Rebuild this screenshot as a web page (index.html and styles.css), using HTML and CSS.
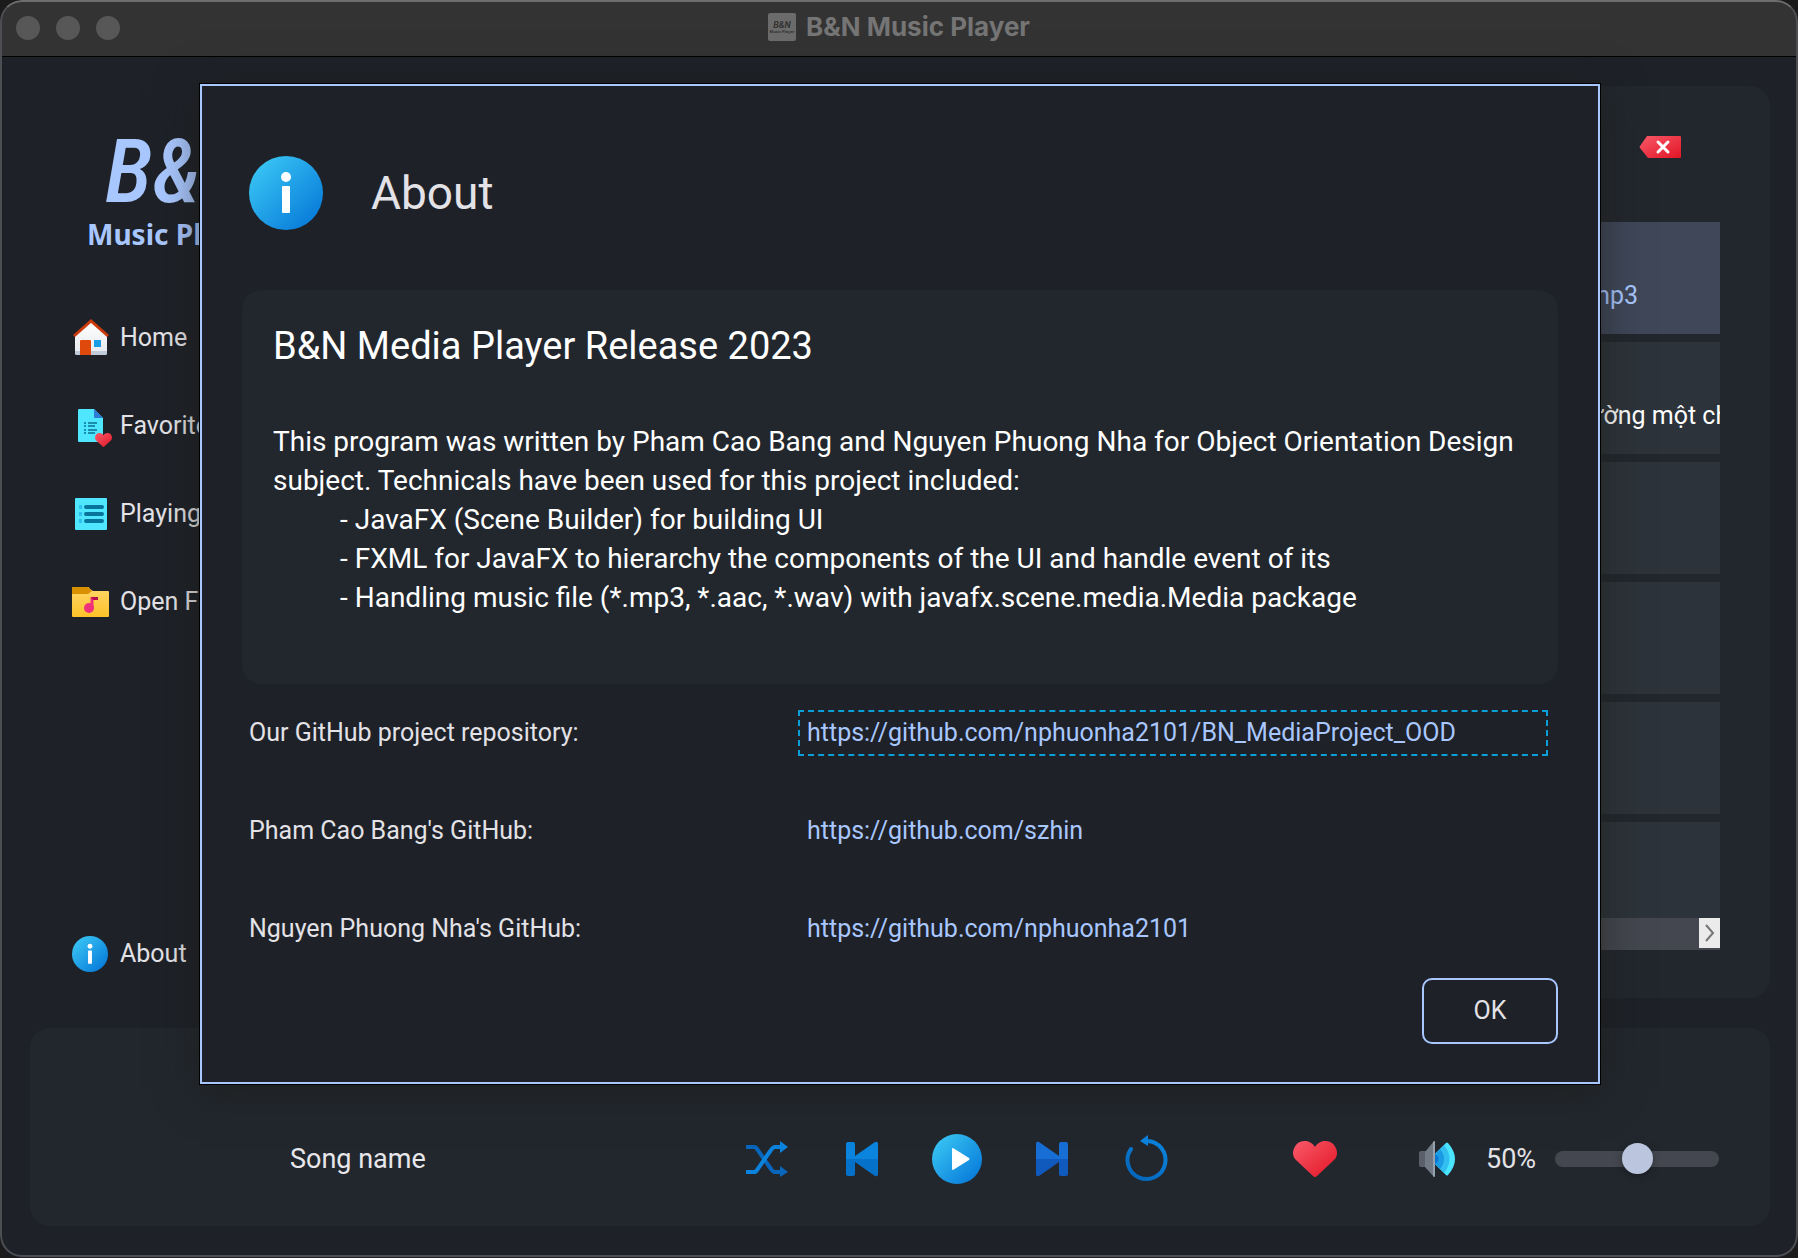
FILE: index.html
```html
<!DOCTYPE html>
<html lang="en">
<head>
<meta charset="utf-8">
<title>B&amp;N Music Player</title>
<link rel="stylesheet" href="styles.css">
</head>
<body>
<svg class="defs" width="0" height="0" aria-hidden="true">
  <defs>
    <linearGradient id="sky" x1="0.15" y1="0.15" x2="0.85" y2="0.85"><stop offset="0" stop-color="#36c0f2"/><stop offset="1" stop-color="#0a7fdb"/></linearGradient>
    <linearGradient id="rose" x1="0" y1="0" x2="1" y2="1"><stop offset="0" stop-color="#fb5a6a"/><stop offset="1" stop-color="#e01525"/></linearGradient>
    <linearGradient id="gold" x1="0" y1="0" x2="0" y2="1"><stop offset="0" stop-color="#ffd668"/><stop offset="1" stop-color="#fdc22a"/></linearGradient>
    <linearGradient id="wall" x1="0" y1="0" x2="0" y2="1"><stop offset="0" stop-color="#ffffff"/><stop offset="1" stop-color="#e6e9ee"/></linearGradient>
    <linearGradient id="turn" x1="1" y1="0" x2="0.3" y2="1"><stop offset="0" stop-color="#0b86e0"/><stop offset="1" stop-color="#0568bd"/></linearGradient>
    <symbol id="info" viewBox="0 0 74 74">
      <circle cx="37" cy="37" r="37" fill="url(#sky)"/>
      <circle cx="37" cy="21" r="5" fill="#fff"/>
      <rect x="33" y="30" width="8" height="27" rx="1" fill="#fff"/>
    </symbol>
    <symbol id="heart" viewBox="0 0 44 36">
      <path d="M22 6C27-2 37-1 41 4c4 5 4 11 0 15L24 35q-2 2-4 0L3 19C-1 15-1 9 3 4c4-5 14-6 19 2z" fill="url(#rose)"/>
    </symbol>
  </defs>
</svg>
<div class="window">
  <header class="titlebar">
    <div class="lights"><span class="light"></span><span class="light"></span><span class="light"></span></div>
    <div class="title">
      <svg width="28" height="28" viewBox="0 0 28 28" aria-hidden="true"><rect width="28" height="28" rx="2" fill="#6b6b6b"/><text x="14" y="15" class="mark-big">B&amp;N</text><text x="14" y="20" class="mark-small">Music Player</text></svg>
      <span>B&amp;N Music Player</span>
    </div>
  </header>

  <div class="content">
    <aside class="sidebar">
      <div class="logo"><span class="logo-mark">B&amp;N</span><span class="logo-name">Music Player</span></div>
      <nav class="nav">
        <button class="nav-item" type="button">
          <svg width="38" height="38" viewBox="0 0 38 38" aria-hidden="true"><path d="M3 17 19 2l16 15v17q0 2-2 2H5q-2 0-2-2z" fill="url(#wall)"/><path d="M3 32h32v2q0 2-2 2H5q-2 0-2-2z" fill="#c0cad8"/><path d="M8 36V22q0-1 1-1h9q1 0 1 1v14z" fill="#df4a0c"/><rect x="22" y="21" width="7" height="7" fill="#1b9de6"/><path d="M2 17 19 2l17 15" fill="none" stroke="#cb3a0a" stroke-width="3"/></svg>
          <span>Home</span>
        </button>
        <button class="nav-item" type="button">
          <svg width="38" height="38" viewBox="0 0 38 38" aria-hidden="true"><path d="M7 2h15l9 9v23q0 1-1 1H7q-1 0-1-1V3q0-1 1-1z" fill="#4fe6ff"/><path d="M22 2 31 11h-8q-1 0-1-1z" fill="#2f7bd8"/><path d="M12 16h2m2 0h9M12 19h2m2 0h7M12 23h2m2 0h9M12 26h2m2 0h7" stroke="#0a7193" stroke-width="1.5"/><svg x="23" y="26" width="17" height="14"><use href="#heart"/></svg></svg>
          <span>Favorites</span>
        </button>
        <button class="nav-item" type="button">
          <svg width="38" height="38" viewBox="0 0 38 38" aria-hidden="true"><rect x="3" y="3" width="32" height="32" rx="1" fill="#4fe6ff"/><path d="M14 12h16M14 19h16M14 26h16" stroke="#06749b" stroke-width="4" stroke-linecap="round"/><path d="M7 12h3M7 19h3M7 26h3" stroke="#30bff0" stroke-width="4"/></svg>
          <span>Playing</span>
        </button>
        <button class="nav-item" type="button">
          <svg width="38" height="38" viewBox="0 0 38 38" aria-hidden="true"><path d="M1 4h15q1 0 2 2l3 2H36q1 0 1 1v24q0 1-1 1H1q-1 0-1-1V5q0-1 1-1z" fill="url(#gold)"/><path d="M1 4h15l4 4-4 3H0V5q0-1 1-1z" fill="#d99000"/><circle cx="17" cy="25" r="5" fill="#f0307a"/><path d="M20 25V14" stroke="#f0307a" stroke-width="3"/><path d="M19 14h7v3h-5" fill="#b80f4d"/></svg>
          <span>Open File</span>
        </button>
        <button class="nav-item nav-last" type="button">
          <svg width="36" height="36" aria-hidden="true"><use href="#info"/></svg>
          <span>About</span>
        </button>
      </nav>
    </aside>

    <main class="queue">
      <div class="queue-head">
        <button class="icon-button" type="button" aria-label="Clear list">
          <svg width="42" height="22" viewBox="0 0 42 22" aria-hidden="true"><path d="M8 0h33q1 0 1 1v20q0 1-1 1H9L1 12q-1-1 0-2z" fill="url(#rose)"/><path d="m19 6 10 10M29 6 19 16" stroke="#fff" stroke-width="3" stroke-linecap="round"/></svg>
        </button>
      </div>
      <ul class="tracks">
        <li class="track selected"><span class="track-name">mp3</span></li>
        <li class="track"><span class="track-name">ường một ch</span></li>
        <li class="track"></li>
        <li class="track"></li>
        <li class="track"></li>
        <li class="track"></li>
      </ul>
      <div class="scrollbar">
        <button class="scroll-button" type="button" aria-label="Scroll right"><svg width="12" height="18" viewBox="0 0 12 18" aria-hidden="true"><path d="m2 1 7 8-7 8" fill="none" stroke="#757575" stroke-width="2"/></svg></button>
      </div>
    </main>
  </div>

  <footer class="player">
    <span class="song">Song name</span>
    <div class="controls">
      <button class="control" type="button" aria-label="Shuffle">
        <svg width="42" height="36" viewBox="0 0 42 36" aria-hidden="true"><path d="M0 6h8q2 0 3 2l14 20q2 3 4 3h6" fill="none" stroke="#0867bd" stroke-width="4"/><path d="m34 25 8 6-8 5z" fill="#0867bd"/><path d="M0 31h8q2 0 3-2L25 9q2-3 4-3h6" fill="none" stroke="#0b83dc" stroke-width="4"/><path d="m34 0 8 6-8 6z" fill="#0b83dc"/></svg>
      </button>
      <button class="control" type="button" aria-label="Previous">
        <svg width="32" height="34" viewBox="0 0 32 34" aria-hidden="true"><path d="M0 17V2q0-2 2-2h5q2 0 2 2v12L29 0q3-1 3 2v15z" fill="#0b84dd"/><path d="M0 17v15q0 2 2 2h5q2 0 2-2V20l20 14q3 1 3-2V17z" fill="#0671c9"/></svg>
      </button>
      <button class="control" type="button" aria-label="Play">
        <svg width="50" height="50" viewBox="0 0 50 50" aria-hidden="true"><circle cx="25" cy="25" r="25" fill="url(#sky)"/><path d="M20 15q0-1 1-1l16 10q1 1 0 2L21 36q-1 0-1-1z" fill="#fff"/></svg>
      </button>
      <button class="control" type="button" aria-label="Next">
        <svg width="32" height="34" viewBox="0 0 32 34" aria-hidden="true"><path d="M32 17V2q0-2-2-2h-5q-2 0-2 2v12L3 0Q0-1 0 2v15z" fill="#176fd6"/><path d="M32 17v15q0 2-2 2h-5q-2 0-2-2V20L3 34q-3 1-3-2V17z" fill="#1059bd"/></svg>
      </button>
      <button class="control" type="button" aria-label="Repeat">
        <svg width="42" height="48" viewBox="0 0 42 48" aria-hidden="true"><path d="M21 6A19 19 0 1 1 5 14" fill="none" stroke="url(#turn)" stroke-width="4" stroke-linecap="round"/><path d="m14 6 8-6v11z" fill="#0b83dc"/></svg>
      </button>
    </div>
    <button class="control" type="button" aria-label="Like"><svg width="44" height="36" aria-hidden="true"><use href="#heart"/></svg></button>
    <div class="volume">
      <button class="control" type="button" aria-label="Mute">
        <svg width="36" height="36" viewBox="0 0 36 36" aria-hidden="true"><path d="M2 10h5v16H2q-2 0-2-2V12q0-2 2-2z" fill="#59606a"/><path d="M6 11 15 0v36L6 26z" fill="#727b85"/><path d="M14 1q2-2 2 0v34q0 2-2 0z" fill="#98a2ae"/><path d="m16 13 11-11q1-1 2 0 14 16 0 32-1 1-2 0L16 23z" fill="#4ce5ff"/><path d="m16 13 9-9q11 14 0 28l-9-9z" fill="#33bef0"/><path d="m16 13 5-5q8 10 0 20l-5-5z" fill="#1a9be3"/><path d="M16 13q7 5 0 10z" fill="#0a76d0"/></svg>
      </button>
      <label class="volume-value" for="volume">50%</label>
      <input class="slider" id="volume" type="range" min="0" max="100" value="50">
    </div>
  </footer>

  <div class="overlay">
    <section class="dialog" role="dialog" aria-labelledby="dialog-title">
      <header class="dialog-head">
        <svg width="74" height="74" aria-hidden="true"><use href="#info"/></svg>
        <h1 class="dialog-title" id="dialog-title">About</h1>
      </header>
      <div class="card">
        <h2 class="card-title">B&amp;N Media Player Release 2023</h2>
        <p class="card-text">This program was written by Pham Cao Bang and Nguyen Phuong Nha for Object Orientation Design subject. Technicals have been used for this project included:</p>
        <ul class="card-list">
          <li>- JavaFX (Scene Builder) for building UI</li>
          <li>- FXML for JavaFX to hierarchy the components of the UI and handle event of its</li>
          <li>- Handling music file (*.mp3, *.aac, *.wav) with javafx.scene.media.Media package</li>
        </ul>
      </div>
      <div class="links">
        <span>Our GitHub project repository:</span><a class="link focused" href="https://github.com/nphuonha2101/BN_MediaProject_OOD">https://github.com/nphuonha2101/BN_MediaProject_OOD</a>
        <span>Pham Cao Bang's GitHub:</span><a class="link" href="https://github.com/szhin">https://github.com/szhin</a>
        <span>Nguyen Phuong Nha's GitHub:</span><a class="link" href="https://github.com/nphuonha2101">https://github.com/nphuonha2101</a>
      </div>
      <div class="actions"><button class="ok" type="button">OK</button></div>
    </section>
  </div>
</div>
</body>
</html>
```
FILE: styles.css
```css
:root {
  --bg: #1e2128;
  --panel: #22272e;
  --row: #2c333a;
  --accent: #a9c7ff;
  --text: #e3e2e6;
  --track: #44474f;
}

* { box-sizing: border-box; }

body {
  margin: 0;
  background: #1b1b1b;
  color: var(--text);
  font-family: Roboto, "Liberation Sans", sans-serif;
  font-size: 25px;
  line-height: 32px;
}

button {
  padding: 0;
  border: 0;
  background: none;
  color: inherit;
  font: inherit;
}

svg { display: block; flex: none; overflow: visible; }
ul { margin: 0; padding: 0; list-style: none; }
.defs { position: absolute; }

.window {
  position: relative;
  display: flex;
  flex-direction: column;
  min-height: 100vh;
  overflow: hidden;
  border-radius: 22px;
  background: var(--bg);
}

/* rim of the window, drawn over its contents */
.window::after {
  content: "";
  position: absolute;
  inset: 0 0 1px;
  border: 2px solid #4c4e52;
  border-top-color: #6d6d6d;
  border-radius: 22px;
  pointer-events: none;
}

.titlebar {
  position: relative;
  display: flex;
  justify-content: center;
  height: 57px;
  padding-top: 10px;
  border-bottom: 1px solid #000;
  background: #333;
  color: #757575;
  font-family: Inter, "Liberation Sans", sans-serif;
  font-size: 26px;
  font-weight: 700;
}

.lights {
  position: absolute;
  left: 16px;
  top: 16px;
  display: flex;
  gap: 16px;
}

.light { width: 24px; height: 24px; border-radius: 50%; background: #575757; }
.title { display: flex; gap: 10px; align-items: center; height: 34px; }
.mark-big { fill: #333; font: italic 700 9px Roboto, sans-serif; text-anchor: middle; }
.mark-small { fill: #333; font: 700 4px "Noto Sans", sans-serif; text-anchor: middle; }

.content {
  flex: 1;
  display: flex;
  padding: 29px 28px 30px 72px;
}

.sidebar { display: flex; flex-direction: column; width: 260px; }

.logo {
  display: flex;
  flex-direction: column;
  align-items: flex-start;
  height: 208px;
  padding: 42px 0 0 15px;
  color: var(--accent);
}

.logo-mark {
  padding-left: 18px;
  font: italic 500 88px/88px "Roboto Condensed", Roboto, sans-serif;
}

.logo-name { font: 700 28px/36px "Noto Sans", sans-serif; }
.nav { flex: 1; display: flex; flex-direction: column; }

.nav-item {
  display: flex;
  align-items: center;
  gap: 10px;
  height: 88px;
  text-align: left;
}

.nav-last { gap: 12px; margin-top: auto; }

.queue {
  flex: 1;
  display: flex;
  flex-direction: column;
  min-width: 0;
  padding: 50px 50px 48px;
  border-radius: 20px;
  background: var(--panel);
}

.queue-head { display: flex; justify-content: flex-end; height: 86px; padding-right: 39px; }
.icon-button { height: 22px; }

.tracks {
  flex: 1 1 0;
  display: flex;
  flex-direction: column;
  gap: 8px;
  min-height: 0;
  overflow: hidden;
}

.track {
  flex: none;
  display: flex;
  justify-content: flex-end;
  align-items: center;
  height: 112px;
  padding-top: 36px;
  background: var(--row);
  color: #fff;
}

.track.selected { background: #3f4759; color: var(--accent); }
.track-name { width: 132px; overflow: hidden; white-space: nowrap; line-height: 40px; }

.scrollbar { display: flex; justify-content: flex-end; height: 32px; background: var(--track); }

.scroll-button {
  display: flex;
  align-items: center;
  justify-content: center;
  width: 21px;
  height: 30px;
  background: #ebebeb;
}

.player {
  display: flex;
  align-items: center;
  height: 198px;
  margin: 0 28px 32px 30px;
  padding: 64px 51px 0 260px;
  border-radius: 20px;
  background: var(--panel);
  font-size: 27px;
}

.song { flex: 1; color: #e8e7eb; }

.controls { display: flex; gap: 45px; margin-right: 118px; }
.control { display: flex; align-items: center; justify-content: center; width: 50px; height: 50px; }
.volume { display: flex; align-items: center; margin-left: 72px; }
.volume-value { width: 69px; margin-left: 24px; }

.slider {
  appearance: none;
  width: 164px;
  height: 32px;
  margin: 0;
  background: none;
}

.slider::-webkit-slider-runnable-track { height: 16px; border-radius: 8px; background: var(--track); }

.slider::-webkit-slider-thumb {
  appearance: none;
  width: 31px;
  height: 31px;
  margin-top: -8px;
  border-radius: 50%;
  background: #bbc6de;
  box-shadow: 0 2px 8px rgba(0, 0, 0, 0.3);
}

.overlay {
  position: absolute;
  inset: 0;
  padding: 84px 198px 174px 200px;
}

.dialog {
  display: flex;
  flex-direction: column;
  min-height: 100%;
  padding: 0 40px 38px;
  border: 2px solid var(--accent);
  background: var(--bg);
  box-shadow: 0 0 0 1px #000, 0 6px 40px rgba(28, 28, 20, 0.6);
}

.dialog-head { display: flex; align-items: center; gap: 48px; padding: 70px 7px 60px; }
.dialog-title { margin: 0; font-size: 46px; font-weight: 400; line-height: 56px; }

.card {
  flex: 1;
  padding: 32px 31px 28px;
  border-radius: 20px;
  background: var(--panel);
  color: #fff;
  font-size: 28px;
  line-height: 39px;
}

.card-title { margin: 0 0 52px; font-size: 38px; font-weight: 400; line-height: 48px; }
.card-text { margin: 0; }
.card-list { padding-left: 67px; }

.links {
  display: grid;
  grid-template-columns: 549fr 750fr;
  gap: 52px 0;
  align-items: center;
  padding: 26px 10px 26px 7px;
}

.link {
  padding: 5px 7px;
  border: 2px solid transparent;
  color: var(--accent);
  text-decoration: none;
}

.link.focused { border: 2px dashed #0a9fd6; }
.actions { display: flex; justify-content: flex-end; }

.ok {
  width: 136px;
  height: 66px;
  border: 2px solid var(--accent);
  border-radius: 10px;
}
```
